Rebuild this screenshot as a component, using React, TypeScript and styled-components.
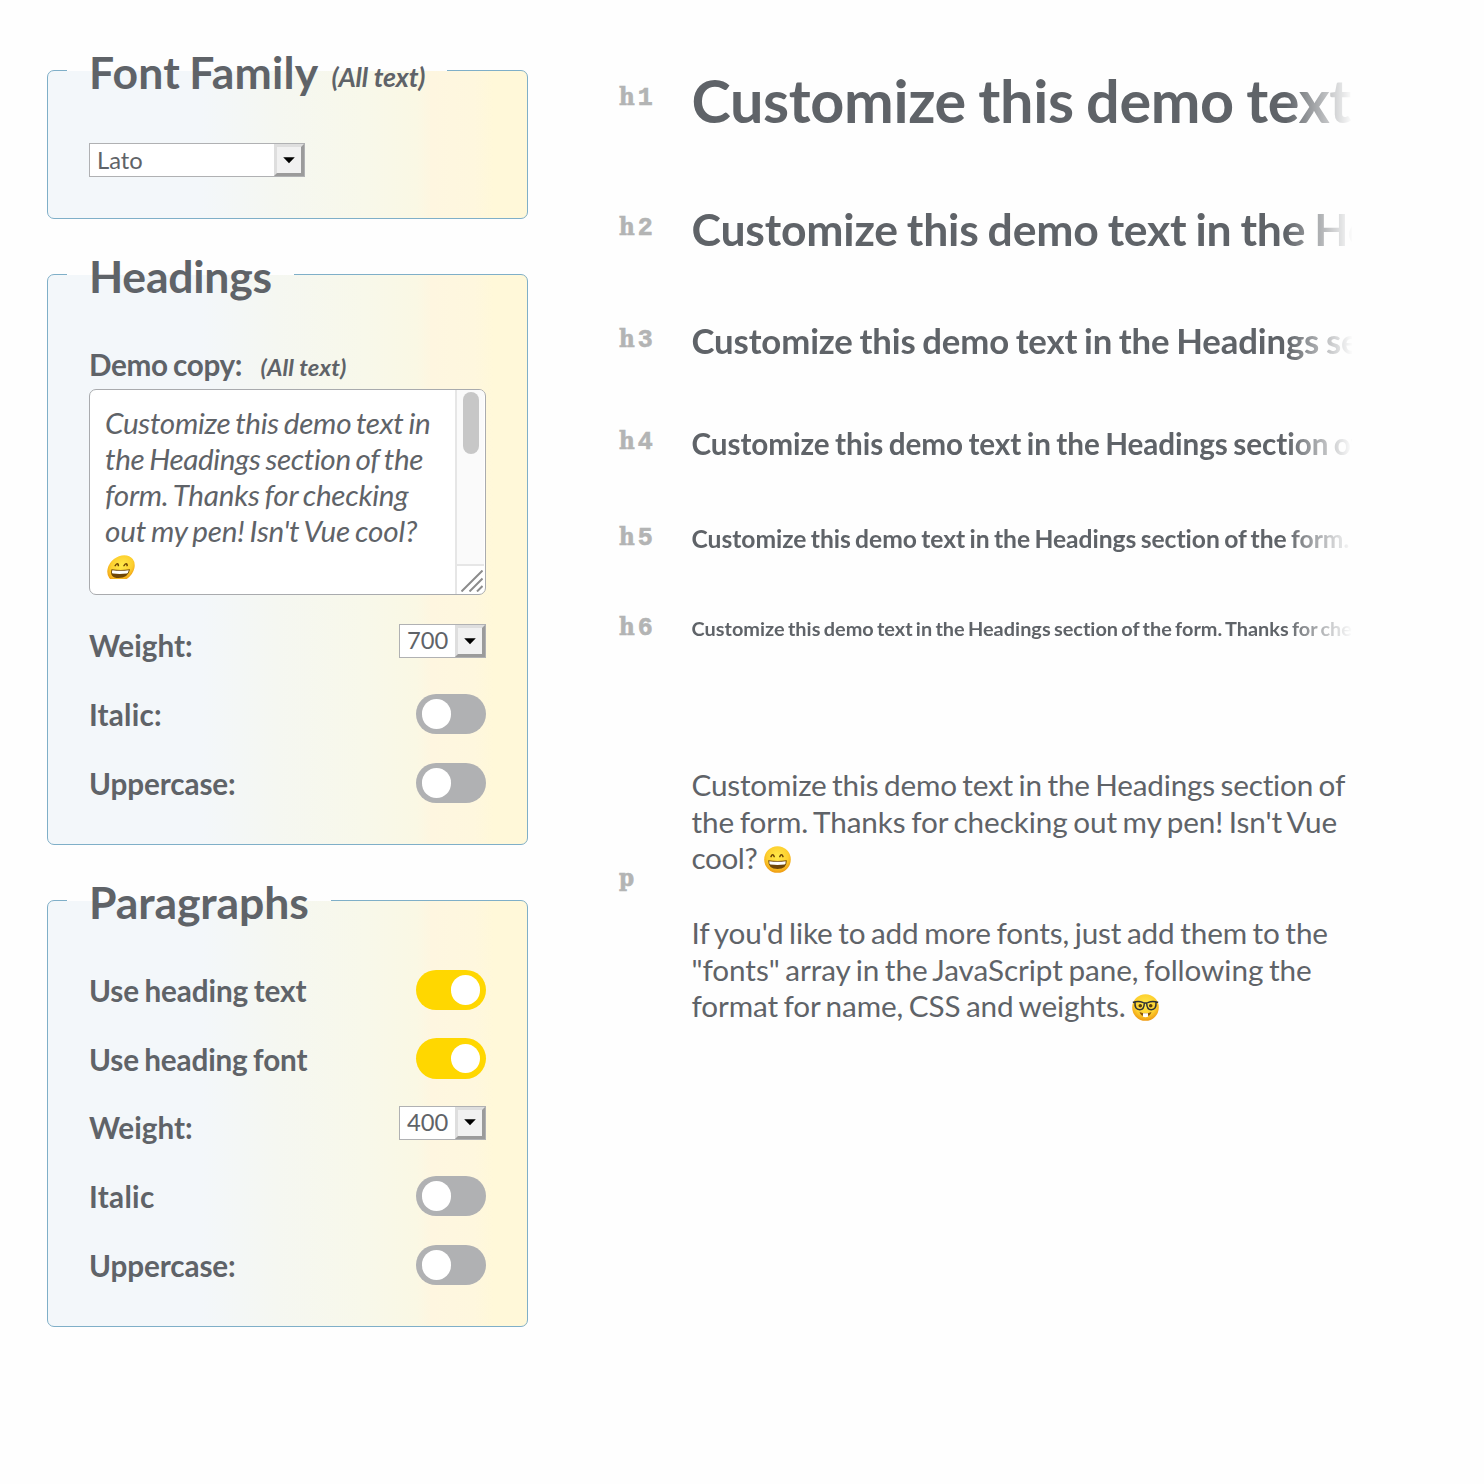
import React, { useState } from 'react';
import styled, { createGlobalStyle, css } from 'styled-components';

const INK = '#5f6368';
const EDGE = '#7fafc8';
const MUTED = '#b0b1b3';

const GlobalStyle = createGlobalStyle`
  * { box-sizing: border-box; }
  html { font-size: 2vw; }
  body {
    margin: 0;
    background: #fefefe;
    color: ${INK};
    font-family: Lato, "Open Sans", sans-serif;
    font-variant-ligatures: none;
    word-spacing: -0.055em;
  }
`;

const Page = styled.main`
  display: flex;
  gap: 91px;
  min-height: 100vh;
  padding: 44px 47px 0;
`;

const Controls = styled.form`
  display: flex;
  flex-direction: column;
  gap: 29px;
  width: 481px;
  flex: none;
`;

const Card = styled.fieldset<{ $height: number }>`
  min-width: 0;
  height: ${p => p.$height}px;
  margin: 0;
  padding: 0 41px 0 19px;
  border: 1px solid ${EDGE};
  border-radius: 7px;
  background: linear-gradient(90deg, #f3f7fa 0%, #f3f7fa 32%, #f5f7f1 48%, #f8f8ea 66%, #faf8e4 77%, #fef6e0 80%, #fef7de 89%, #fff8d9 93%, #fff8d9 100%);
`;

const Legend = styled.legend<{ $track?: number }>`
  height: 52px;
  padding: 0 22px;
  font-size: 1.5rem;
  font-weight: 700;
  line-height: 56px;
  letter-spacing: ${p => p.$track || 0}px;
  white-space: nowrap;
`;

const Note = styled.em<{ $size: number; $gap: number; $raise?: number; $track?: number }>`
  margin-left: ${p => p.$gap}px;
  font-size: ${p => p.$size}rem;
  font-weight: 700;
  line-height: 1;
  letter-spacing: ${p => p.$track || 0}px;
  word-spacing: 0;
  vertical-align: ${p => p.$raise || 0}px;
`;

const CardBody = styled.div<{ $top: number }>`
  padding: ${p => p.$top}px 0 0 22px;
`;

const Row = styled.div`
  display: flex;
  align-items: center;
  justify-content: space-between;
  height: 68.75px;
`;

const Label = styled.label<{ $track?: number }>`
  padding-top: 2px;
  font-size: 1rem;
  font-weight: 700;
  line-height: 36px;
  letter-spacing: ${p => p.$track || 0}px;
`;

const SelectBox = styled.div<{ $width: number; $lift?: number }>`
  display: flex;
  width: ${p => p.$width}px;
  height: 34px;
  margin-bottom: ${p => p.$lift || 0}px;
  border: 1px solid #b0b1b3;
  background: #fff;
  font-size: 0.8rem;
  line-height: ${p => (p.$lift ? 31 : 33)}px;
`;

const SelectValue = styled.span`
  flex: 1;
  padding-left: 7px;
`;

const SelectButton = styled.span`
  display: grid;
  place-items: center;
  width: 30px;
  height: 32px;
  padding-right: 1px;
  border: 3px solid;
  border-color: #dedede #9b9b9b #9b9b9b #dedede;
  background: #f1f1f1;
`;

const Track = styled.button<{ $on: boolean }>`
  display: flex;
  align-items: center;
  justify-content: ${p => (p.$on ? 'flex-end' : 'flex-start')};
  width: 70px;
  height: 40.5px;
  padding: 0 6px 0 5.5px;
  border: 0;
  border-radius: 21px;
  background: ${p => (p.$on ? '#ffd700' : MUTED)};
`;

const Knob = styled.span`
  width: 29.5px;
  height: 29.5px;
  border-radius: 50%;
  background: #fff;
`;

const CopyHead = styled.div`
  height: 42px;
  line-height: 34px;
`;

const CopyBox = styled.div`
  display: flex;
  width: 397px;
  height: 206px;
  margin-bottom: 16px;
  border: 1px solid #a9abae;
  border-radius: 7px;
  background: #fff;
  overflow: hidden;
`;

const CopyText = styled.div`
  flex: 1;
  height: 189px;
  padding: 15px 0 0 15px;
  overflow: hidden;
  font-style: italic;
  line-height: 36px;
  word-spacing: -1.7px;
  white-space: nowrap;
`;

const Line = styled.span<{ $track: number }>`
  display: block;
  letter-spacing: ${p => p.$track}px;
`;

const ScrollColumn = styled.div`
  display: flex;
  flex-direction: column;
  width: 29px;
  margin-right: 1px;
  border-left: 2px solid #e6e6e6;
`;

const ScrollTrack = styled.div`
  flex: 1;
  padding: 2px 0 0 6px;
  border-bottom: 2px solid #e6e6e6;
  background: #fafafa;
`;

const ScrollThumb = styled.div`
  width: 16px;
  height: 62px;
  border-radius: 8px;
  background: #c7c7c7;
`;

const ResizeGrip = styled.div`
  display: flex;
  justify-content: flex-end;
  height: 28px;
  padding: 4px 1px 0 0;
`;

const Preview = styled.section`
  display: flex;
  flex-direction: column;
  width: 740px;
  padding-top: 8px;
`;

const Sample = styled.div<{ $height: number }>`
  display: grid;
  grid-template-columns: 72.5px 660.5px;
  align-items: center;
  height: ${p => p.$height}px;
`;

const Tag = styled.span<{ $raise?: number }>`
  display: flex;
  align-items: baseline;
  gap: 3px;
  padding-bottom: ${p => p.$raise || 6}px;
  color: #b3b4b4;
  font: 700 24px/30px "DejaVu Serif Condensed", "DejaVu Serif", serif;
  -webkit-text-stroke: 0.6px #b3b4b4;
`;

const Level = styled.span`
  font: 700 25px/30px "Liberation Mono", monospace;
`;

const Heading = styled.div<{ $size: number; $raise: number; $track: number }>`
  padding-bottom: ${p => p.$raise}px;
  font-size: ${p => p.$size}rem;
  font-weight: 700;
  line-height: 1.25;
  letter-spacing: ${p => p.$track}em;
  white-space: nowrap;
  overflow: hidden;
  mask-image: linear-gradient(90deg, #000 594px, transparent 661px);
`;

const Copy = styled.div`
  line-height: 36.5px;
  word-spacing: -1.9px;
  white-space: nowrap;
`;

const Para = styled.p`
  margin: 0 0 38.5px;
  &:last-child { margin-bottom: 0; }
`;

const Emoji = styled.svg<{ $slant?: boolean }>`
  width: 29px;
  height: 29px;
  vertical-align: -5px;
  ${p => p.$slant && css`transform: translateX(1.5px) skewX(-14deg);`}
`;

const Grin = ({ slant }: { slant?: boolean }) => (
  <Emoji viewBox="0 0 29 29" $slant={slant} role="img" aria-label="grinning face">
    <defs>
      <radialGradient id="skin" cx="50%" cy="38%" r="62%">
        <stop offset="0" stopColor="#ffe94a" />
        <stop offset="0.65" stopColor="#fdcf2e" />
        <stop offset="1" stopColor="#ef9a12" />
      </radialGradient>
    </defs>
    <circle cx="14.5" cy="14.5" r="13.3" fill="url(#skin)" />
    <path d="M8 11.6q1.7-3.6 3.2 0M16.8 11.6q1.7-3.6 3.2 0" fill="none" stroke="#6b4203" strokeWidth="1.5" strokeLinecap="round" />
    <path d="M5.2 15.3q9.3 1.3 18.6 0q.2 8.8-9.3 8.8q-9.4 0-9.3-8.8z" fill="#6f4608" />
    <path d="M6.3 16.2q8.2 1.2 16.4 0q.2 3-1.3 3.3q-7 .9-13.8 0q-1.6-.4-1.3-3.3z" fill="#fff" />
  </Emoji>
);

const Nerd = () => (
  <Emoji viewBox="0 0 29 29" role="img" aria-label="nerd face">
    <circle cx="14.5" cy="14.5" r="13.3" fill="url(#skin)" />
    <path d="M8.500 19q6 2.400 12 0q-1 4.200-6 4.200t-6-4.200z" fill="#8a560c" />
    <path d="M12 20.200h5v3.600q-2.500.8-5 0z" fill="#fff" />
    <circle cx="9.3" cy="12.8" r="1.8" fill="#5b3a08" />
    <circle cx="19.7" cy="12.8" r="1.8" fill="#5b3a08" />
    <path d="M1.800 9.400q5.700-1.900 10.500.2q2.200.8 4.400 0q4.800-2.100 10.500-.2M4 9.500q-.5 7.200 4.700 7.200q4.500 0 4.600-6.500M25 9.500q.5 7.200-4.700 7.200q-4.500 0-4.600-6.500" fill="none" stroke="#2f3236" strokeWidth="1.5" />
  </Emoji>
);

const Select = ({ value, width, lift }: { value: string; width: number; lift?: number }) => (
  <SelectBox $width={width} $lift={lift}>
    <SelectValue>{value}</SelectValue>
    <SelectButton>
      <svg width="12" height="7" viewBox="0 0 12 7"><path d="M.2.300h11.600L6 6.300z" fill="#000" /></svg>
    </SelectButton>
  </SelectBox>
);

const Toggle = ({ initial = false }: { initial?: boolean }) => {
  const [on, setOn] = useState(initial);
  return (
    <Track type="button" $on={on} onClick={() => setOn(!on)}>
      <Knob />
    </Track>
  );
};

const TEXT = "Customize this demo text in the Headings section of the form. Thanks for checking out my pen! Isn't Vue cool?";

const HEADINGS = [
  { level: 1, size: 2, height: 98, raise: 2, track: -0.006 },
  { level: 2, size: 1.5, height: 162, raise: 4, track: -0.0045 },
  { level: 3, size: 1.17, height: 62, raise: 4, track: -0.0035 },
  { level: 4, size: 1, height: 142, raise: 3, track: -0.0025 },
  { level: 5, size: 0.83, height: 50, raise: 3, track: -0.001 },
  { level: 6, size: 0.67, height: 130, raise: 5, track: 0.0015 },
];

export default function App() {
  return (
    <>
      <GlobalStyle />
      <Page>
        <Controls>
          <Card $height={175}>
            <Legend $track={0.2}>Font Family<Note $size={0.9} $gap={13} $raise={2} $track={-0.15}>(All text)</Note></Legend>
            <CardBody $top={47}>
              <Select value="Lato" width={216} />
            </CardBody>
          </Card>
          <Card $height={597}>
            <Legend $track={-0.25}>Headings</Legend>
            <CardBody $top={47}>
              <CopyHead>
                <Label $track={-0.34}>Demo copy:</Label>
                <Note $size={0.8} $gap={18.5} $track={0.1}>(All text)</Note>
              </CopyHead>
              <CopyBox>
                <CopyText>
                  <Line $track={-0.3}>Customize this demo text in</Line>
                  <Line $track={-0.38}>the Headings section of the</Line>
                  <Line $track={-0.27}>form. Thanks for checking</Line>
                  <Line $track={-0.2}>out my pen! Isn't Vue cool?</Line>
                  <Grin slant />
                </CopyText>
                <ScrollColumn>
                  <ScrollTrack><ScrollThumb /></ScrollTrack>
                  <ResizeGrip>
                    <svg width="22" height="22" viewBox="0 0 22 22" fill="none" stroke="#8c8c8c" strokeWidth="2">
                      <path d="M.5 21.500L21.500.5M8.500 21.500L21.500 8.500M16 21.500L21.500 16" />
                    </svg>
                  </ResizeGrip>
                </ScrollColumn>
              </CopyBox>
              <Row><Label>Weight:</Label><Select value="700" width={87} lift={8} /></Row>
              <Row><Label $track={0.2}>Italic:</Label><Toggle /></Row>
              <Row><Label $track={-0.1}>Uppercase:</Label><Toggle /></Row>
            </CardBody>
          </Card>
          <Card $height={453}>
            <Legend $track={-0.1}>Paragraphs</Legend>
            <CardBody $top={29.6}>
              <Row><Label $track={-0.1}>Use heading text</Label><Toggle initial /></Row>
              <Row><Label $track={-0.15}>Use heading font</Label><Toggle initial /></Row>
              <Row><Label>Weight:</Label><Select value="400" width={87} lift={9} /></Row>
              <Row><Label $track={0.3}>Italic</Label><Toggle /></Row>
              <Row><Label $track={-0.1}>Uppercase:</Label><Toggle /></Row>
            </CardBody>
          </Card>
        </Controls>
        <Preview>
          {HEADINGS.map(h => (
            <Sample key={h.level} $height={h.height}>
              <Tag>h<Level>{h.level}</Level></Tag>
              <Heading $size={h.size} $raise={h.raise} $track={h.track}>{TEXT}</Heading>
            </Sample>
          ))}
          <Sample $height={400}>
            <Tag $raise={36}>p</Tag>
            <Copy>
              <Para>
                <Line $track={-0.18}>Customize this demo text in the Headings section of</Line>
                <Line $track={-0.08}>the form. Thanks for checking out my pen! Isn't Vue</Line>
                <Line $track={-0.4}>cool? <Grin /></Line>
              </Para>
              <Para>
                <Line $track={-0.11}>If you'd like to add more fonts, just add them to the</Line>
                <Line $track={-0.06}>"fonts" array in the JavaScript pane, following the</Line>
                <Line $track={-0.12}>format for name, CSS and weights. <Nerd /></Line>
              </Para>
            </Copy>
          </Sample>
        </Preview>
      </Page>
    </>
  );
}
